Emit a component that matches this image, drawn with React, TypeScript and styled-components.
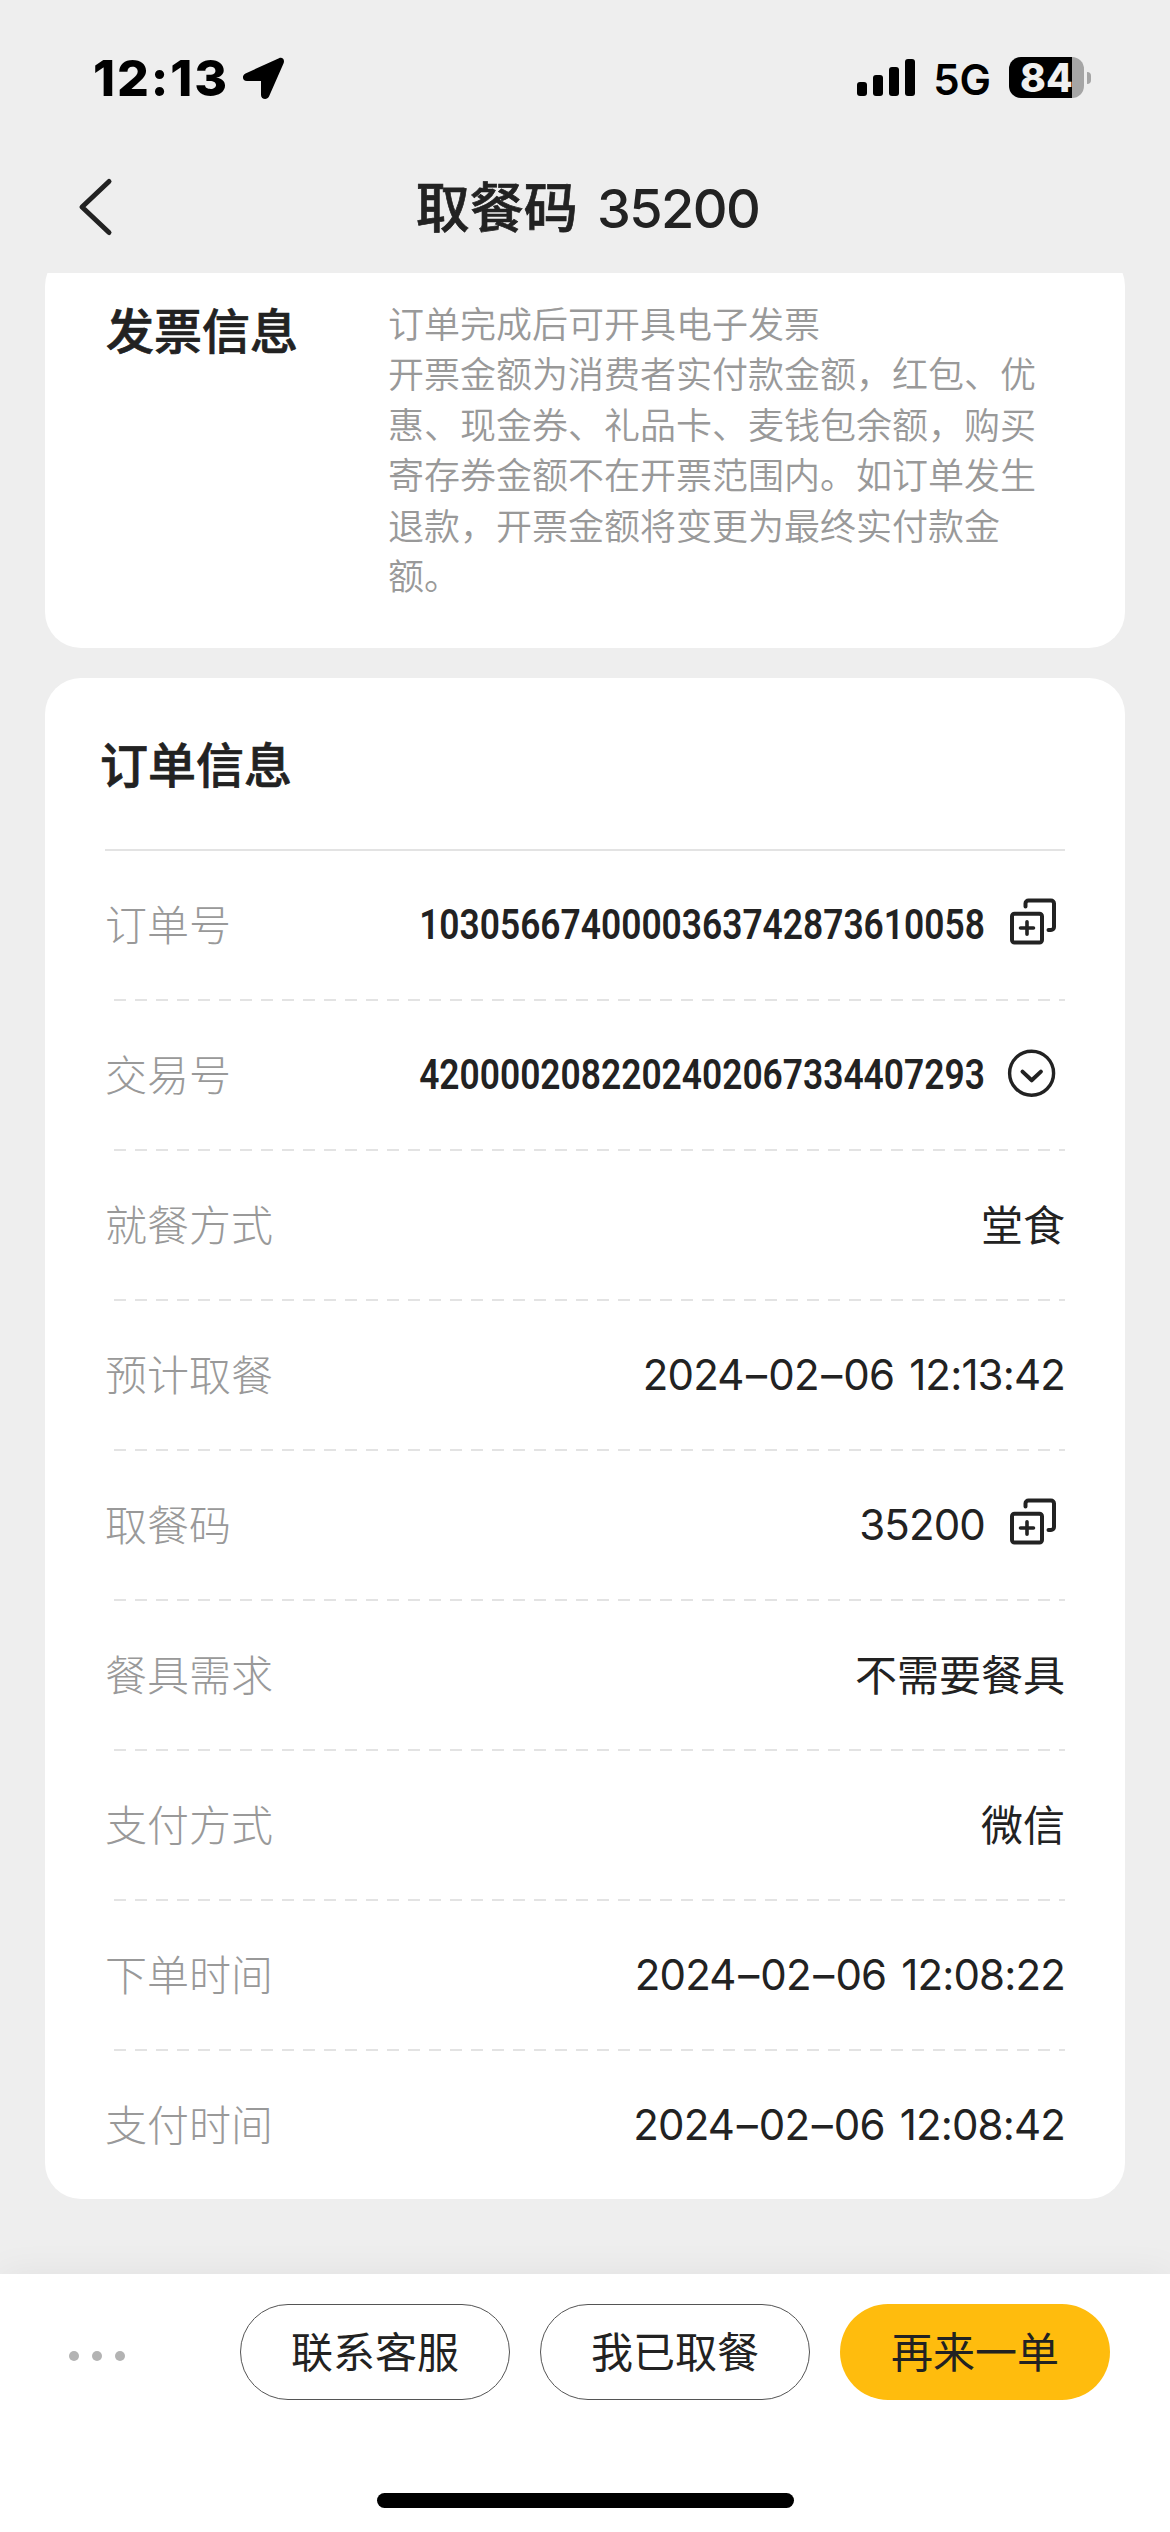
import React from "react";
import styled, { createGlobalStyle } from "styled-components";

const Global = createGlobalStyle`
  *, *::before, *::after { box-sizing: border-box; }
  body { margin: 0; background: #eeeeee; }
`;

const ui = `Inter, "Noto Sans CJK SC", sans-serif`;

const Screen = styled.div`
  width: 1170px;
  height: 2532px;
  display: flex;
  flex-direction: column;
  overflow: hidden;
  background: #eeeeee;
  color: #222222;
  font-family: ${ui};
`;

const StatusBar = styled.div`
  height: 141px;
  flex: none;
  display: flex;
  justify-content: space-between;
  align-items: flex-start;
  padding: 57px 79px 0 93px;
`;

const StatusLeft = styled.div`
  display: flex;
  height: 42px;
  gap: 13px;
`;

const Clock = styled.span`
  width: 136px;
  font-size: 50px;
  font-weight: 800;
  letter-spacing: 1.9px;
  line-height: 42px;
  color: #000;
  white-space: nowrap;
`;

const StatusRight = styled.div`
  display: flex;
  height: 41px;
  gap: 18px;
`;

const Network = styled.span`
  font-size: 42px;
  font-weight: 600;
  line-height: 45px;
  color: #000;
`;

const Battery = styled.div`
  display: flex;
  align-items: center;
  gap: 3px;
`;

const BatteryBody = styled.div`
  width: 75px;
  height: 41px;
  padding-left: 11px;
  border-radius: 12px;
  background: linear-gradient(90deg, #000 63px, #a5a5a5 63px);
  color: #f0f0f0;
  font-size: 39px;
  font-weight: 800;
  line-height: 42px;
`;

const BatteryCap = styled.div`
  width: 4px;
  height: 12px;
  border-radius: 0 4px 4px 0;
  background: #a5a5a5;
`;

const NavBar = styled.div`
  height: 132px;
  flex: none;
  display: grid;
  grid-template-columns: 120px 1fr 120px;
  align-items: center;
`;

const BackIcon = styled.svg`
  margin: 0 0 0 76px;
  display: block;
`;

const Title = styled.h1`
  margin: 0;
  padding: 3px 0 0 5px;
  text-align: center;
  font-size: 54px;
  font-weight: 500;
  line-height: 64px;
  -webkit-text-stroke: 0.7px #222;
`;

const TitleNumber = styled.span`
  margin-left: 5px;
  letter-spacing: -1.6px;
  -webkit-text-stroke: 0;
`;

const Content = styled.div`
  flex: 1;
  min-height: 0;
  overflow: hidden;
  padding: 0 45px;
`;

const Card = styled.section`
  background: #fff;
  border-radius: 36px;
`;

const InvoiceCard = styled(Card)`
  height: 398px;
  margin-top: -23px;
  display: flex;
  padding: 50px 0 0 61px;
`;

const InvoiceTitle = styled.h2`
  margin: 7px 0 0;
  width: 282px;
  flex: none;
  font-size: 48px;
  font-weight: 500;
  line-height: 50px;
  -webkit-text-stroke: 0.7px #222;
`;

const InvoiceText = styled.p`
  margin: 0;
  width: 660px;
  color: #999;
  font-size: 36px;
  font-weight: 350;
  line-height: 50.4px;
`;

const OrderCard = styled(Card)`
  margin-top: 30px;
  height: 1521px;
  padding: 0 60px;
`;

const OrderTitle = styled.h2`
  margin: 0 0 0 -5px;
  height: 171px;
  font-size: 48px;
  font-weight: 500;
  line-height: 175px;
  -webkit-text-stroke: 0.7px #222;
`;

const Row = styled.div<{ $solid?: boolean }>`
  height: 150px;
  padding-top: 2px;
  display: flex;
  align-items: center;
  justify-content: space-between;
  background: ${(p) =>
      p.$solid
        ? "linear-gradient(#e3e3e3, #e3e3e3)"
        : "repeating-linear-gradient(90deg, transparent 0 9px, #e3e3e3 9px 21px)"}
    0 0 / 100% 2px no-repeat;
`;

const Label = styled.span`
  padding-top: 1px;
  font-size: 42px;
  font-weight: 300;
  color: #999;
  line-height: 60px;
`;

const ValueGroup = styled.div`
  display: flex;
  align-items: center;
  gap: 18px;
`;

const Value = styled.span`
  padding-top: 1px;
  font-size: 42px;
  line-height: 60px;
  white-space: nowrap;
`;

const Digits = styled(Value)`
  padding-top: 0;
  letter-spacing: -0.85px;
  word-spacing: 4px;
`;

const Dash = styled.span`
  margin: 0 2px 0 2.5px;
`;

const Code = styled(Value)`
  padding-top: 0;
  font-family: Roboto, sans-serif;
  font-weight: 600;
  transform: scaleX(0.842);
  transform-origin: right center;
`;

const IconSlot = styled.svg`
  display: block;
  flex: none;
`;

const BottomBar = styled.footer`
  height: 258px;
  flex: none;
  position: relative;
  background: #fff;
  box-shadow: 0 0 36px rgba(0, 0, 0, 0.06);
  display: flex;
  flex-direction: column;
  align-items: center;
`;

const Actions = styled.div`
  width: 100%;
  display: flex;
  align-items: center;
  gap: 30px;
  padding: 30px 60px 0 69px;
`;

const More = styled.div`
  display: flex;
  gap: 12.4px;
  margin: 8px auto 0 0;
`;

const Dot = styled.i`
  width: 10.4px;
  height: 10.4px;
  border-radius: 50%;
  background: #b3b3b3;
`;

const Pill = styled.button<{ $primary?: boolean }>`
  width: 270px;
  height: 96px;
  padding: 2px 0 0;
  border-radius: 48px;
  border: ${(p) => (p.$primary ? "0" : "1px solid #555")};
  background: ${(p) => (p.$primary ? "#ffbc0d" : "#fff")};
  color: #222;
  font-family: ${ui};
  font-size: 42px;
  line-height: 60px;
`;

const HomeIndicator = styled.div`
  width: 417px;
  height: 15px;
  margin-top: 93px;
  border-radius: 8px;
  background: #000;
`;

const CopyIcon = () => (
  <IconSlot width="62" height="60" viewBox="0 0 62 60" fill="none" stroke="#222" strokeWidth="4" strokeLinecap="round" strokeLinejoin="round">
    <rect x="9" y="18.7" width="30" height="28.8" rx="2.5" />
    <path d="M24 26.700v12.600M17.500 33h13" strokeWidth="3.6" />
    <path d="M22.500 11.500V8.500a3 3 0 0 1 3-3h22.500a3 3 0 0 1 3 3v23.500a3 3 0 0 1-3 3h-2.500" />
  </IconSlot>
);

const ExpandIcon = () => (
  <IconSlot width="62" height="60" viewBox="0 0 62 60" fill="none" stroke="#222" strokeWidth="4" strokeLinecap="round" strokeLinejoin="round">
    <circle cx="28.600" cy="28.200" r="22" strokeWidth="3.400" />
    <path d="M19.500 26.600l9.200 8.700 9.200-8.700" />
  </IconSlot>
);

type Item = {
  label: string;
  value: string;
  kind: "text" | "digits" | "code";
  icon?: "copy" | "expand";
};

const items: Item[] = [
  { label: "订单号", value: "1030566740000363742873610058", kind: "code", icon: "copy" },
  { label: "交易号", value: "4200002082202402067334407293", kind: "code", icon: "expand" },
  { label: "就餐方式", value: "堂食", kind: "text" },
  { label: "预计取餐", value: "2024–02–06 12:13:42", kind: "digits" },
  { label: "取餐码", value: "35200", kind: "digits", icon: "copy" },
  { label: "餐具需求", value: "不需要餐具", kind: "text" },
  { label: "支付方式", value: "微信", kind: "text" },
  { label: "下单时间", value: "2024–02–06 12:08:22", kind: "digits" },
  { label: "支付时间", value: "2024–02–06 12:08:42", kind: "digits" },
];

const ItemValue = ({ value, kind }: Item) => {
  if (kind === "code") return <Code>{value}</Code>;
  if (kind === "text") return <Value>{value}</Value>;
  return (
    <Digits>
      {value.split("–").map((part, i) => (
        <React.Fragment key={i}>
          {i > 0 && <Dash>–</Dash>}
          {part}
        </React.Fragment>
      ))}
    </Digits>
  );
};

export default function App() {
  return (
    <Screen lang="zh-CN">
      <Global />
      <StatusBar>
        <StatusLeft>
          <Clock>12:13</Clock>
          <svg width="43" height="43" viewBox="0 0 43 43">
            <path d="M37 1.200C40.500 -.2 43 2.800 41.600 6.300L27 39.500C25.300 43.200 19 42.500 19 38V24H5C.3 24-.5 18.200 3.500 16.400Z" fill="#000" />
          </svg>
        </StatusLeft>
        <StatusRight>
          <svg width="58" height="41" viewBox="0 0 58 41">
            <rect x="0" y="25" width="10" height="14" rx="3" />
            <rect x="16" y="18" width="10" height="21" rx="3" />
            <rect x="32" y="10" width="10" height="29" rx="3" />
            <rect x="48" y="2" width="10" height="37" rx="3" />
          </svg>
          <Network>5G</Network>
          <Battery>
            <BatteryBody>84</BatteryBody>
            <BatteryCap />
          </Battery>
        </StatusRight>
      </StatusBar>
      <NavBar>
        <BackIcon width="40" height="60" viewBox="0 0 40 60" fill="none" stroke="#222" strokeWidth="5" strokeLinecap="round" strokeLinejoin="round">
          <path d="M33 4.500L6 30l27 25.500" />
        </BackIcon>
        <Title>
          取餐码 <TitleNumber>35200</TitleNumber>
        </Title>
      </NavBar>
      <Content>
        <InvoiceCard>
          <InvoiceTitle>发票信息</InvoiceTitle>
          <InvoiceText>
            订单完成后可开具电子发票
            <br />
            开票金额为消费者实付款金额，红包、优惠、现金券、礼品卡、麦钱包余额，购买寄存券金额不在开票范围内。如订单发生退款，开票金额将变更为最终实付款金额。
          </InvoiceText>
        </InvoiceCard>
        <OrderCard>
          <OrderTitle>订单信息</OrderTitle>
          {items.map((item, i) => (
            <Row key={item.label} $solid={i === 0}>
              <Label>{item.label}</Label>
              <ValueGroup>
                <ItemValue {...item} />
                {item.icon === "copy" && <CopyIcon />}
                {item.icon === "expand" && <ExpandIcon />}
              </ValueGroup>
            </Row>
          ))}
        </OrderCard>
      </Content>
      <BottomBar>
        <Actions>
          <More>
            <Dot />
            <Dot />
            <Dot />
          </More>
          <Pill>联系客服</Pill>
          <Pill>我已取餐</Pill>
          <Pill $primary>再来一单</Pill>
        </Actions>
        <HomeIndicator />
      </BottomBar>
    </Screen>
  );
}
